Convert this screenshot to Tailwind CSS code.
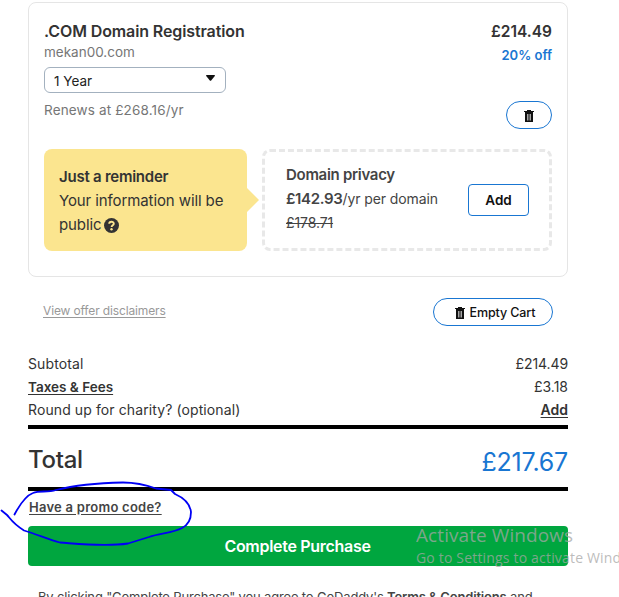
<!DOCTYPE html>
<html lang="en">
<head>
    <meta charset="UTF-8">
    <meta name="viewport" content="width=device-width, initial-scale=1.0">
    <title>Cart</title>
    <script src="https://cdn.jsdelivr.net/npm/@tailwindcss/browser@4"></script>
</head>
<body class="relative w-[619px] h-[597px] overflow-hidden bg-white font-['Inter',sans-serif] text-[#333] whitespace-nowrap">
    <main class="ml-7 w-[540px] pt-[2px]">
        <!-- Cart item -->
        <section class="h-[275px] rounded-lg border border-[#e5e5e5] px-[15px] pt-4">
            <div class="flex justify-between h-[130px]">
                <div>
                    <h2 class="text-[16px] leading-6 font-semibold tracking-[-0.11px]">.COM Domain Registration</h2>
                    <p class="-mt-px text-[13.5px] leading-5 text-[#767676]">mekan00.com</p>
                    <button class="mt-[5px] flex h-[26px] w-[182px] items-center justify-between rounded-md border border-[#a3b1bf] pl-[9px] pr-[10px] text-[13.5px] text-[#222]">
                        <span class="pt-[3px]">1 Year</span>
                        <svg class="w-[9px] h-[6px] -mt-1" viewBox="0 0 9 6"><path d="M0 .8Q0 0 .8 0H8.2Q9 0 9 .8L5.2 5.5Q4.5 6.2 3.8 5.5Z" fill="#111"/></svg>
                    </button>
                    <p class="mt-[7px] text-[13.5px] leading-5 tracking-[0.15px] text-[#767676]">Renews at £268.16/yr</p>
                </div>
                <div class="flex flex-col items-end">
                    <span class="pt-px text-[15.5px] leading-6 font-semibold">£214.49</span>
                    <span class="-mt-px text-[13px] leading-6 font-semibold text-[#1976d2]">20% off</span>
                    <button class="mt-[34px] flex h-7 w-[46px] items-center justify-center rounded-full border border-[#1976d2]">
                        <svg class="w-[10px] h-3 mt-0.5" viewBox="0 0 10 12"><path d="M0 1H3V0H7V1H10V2H9V12H1V2H0Z" fill="#111"/><path d="M3.5 4V10.5M5 4V10.5M6.5 4V10.5" stroke="#ccc" stroke-width=".8"/></svg>
                    </button>
                </div>
            </div>
            <div class="flex justify-between h-[102px]">
                <div class="relative w-[203px] rounded-lg bg-[#fbe58f] pl-[15px] pt-4 text-[15px] leading-6 tracking-[-0.1px]">
                    <h3 class="font-semibold tracking-[-0.24px]">Just a reminder</h3>
                    <p>Your information will be</p>
                    <p class="flex items-center">public
                        <svg class="ml-[3px] w-[15px] h-[15px]" viewBox="0 0 15 15"><circle cx="7.5" cy="7.5" r="7.5" fill="#333"/><path d="M5.2 5.8C5.2 3 9.8 3 9.8 5.7C9.8 7.3 7.6 7.2 7.6 8.9" fill="none" stroke="#fbe58f" stroke-width="1.9"/><circle cx="7.5" cy="11.2" r="1.2" fill="#fbe58f"/></svg>
                    </p>
                    <svg class="absolute left-[203px] top-[39px] w-3 h-6" viewBox="0 0 12 24"><path d="M0 0L12 12L0 24Z" fill="#fbe58f"/></svg>
                </div>
                <div class="flex w-[290px] justify-between rounded-lg border-3 border-dashed border-[#e8e8e8] pl-[21px] pr-5">
                    <div class="pt-[11px] text-[14px] leading-6 tracking-[-0.1px] text-[#444]">
                        <h3 class="text-[15px] font-semibold tracking-[-0.29px]">Domain privacy</h3>
                        <p><b class="text-[15px] font-semibold tracking-[-0.35px]">£142.93</b>/yr per domain</p>
                        <p class="line-through">£178.71</p>
                    </div>
                    <button class="mt-8 h-8 w-[61px] rounded border border-[#1976d2] text-[13.5px] font-semibold text-[#111]">Add</button>
                </div>
            </div>
        </section>

        <div class="mt-[21px] flex h-7 items-center justify-between pl-[15px] pr-[15px]">
            <a class="-mt-0.5 text-[12px] tracking-[-0.14px] text-[#999] underline underline-offset-2">View offer disclaimers</a>
            <button class="flex h-7 w-[120px] items-center justify-center gap-[5px] rounded-full border border-[#1976d2] pl-1 text-[12.5px] font-medium tracking-[-0.12px] text-[#111]">
                <svg class="w-[10px] h-3 mt-0.5" viewBox="0 0 10 12"><path d="M0 1H3V0H7V1H10V2H9V12H1V2H0Z" fill="#111"/><path d="M3.5 4V10.5M5 4V10.5M6.5 4V10.5" stroke="#ccc" stroke-width=".8"/></svg>
                <span class="pt-0.5">Empty Cart</span>
            </button>
        </div>

        <!-- Totals -->
        <div class="mt-[26px] h-[77px] border-b-4 border-black text-[14px] leading-[23px]">
            <div class="flex justify-between"><span class="tracking-[0.1px]">Subtotal</span><span class="tracking-[-0.1px]">£214.49</span></div>
            <div class="flex justify-between"><a class="text-[13.5px] leading-6 -mb-px font-semibold underline underline-offset-2">Taxes &amp; Fees</a><span>£3.18</span></div>
            <div class="flex justify-between"><span class="tracking-[0.1px]">Round up for charity? (optional)</span><a class="font-semibold underline underline-offset-2">Add</a></div>
        </div>
        <div class="flex h-[62px] items-center justify-between border-b-4 border-black">
            <span class="pt-1 text-[24px] font-medium tracking-[-0.3px]">Total</span>
            <span class="pt-[10px] text-[25px] tracking-[-0.2px] text-[#1976d2]">£217.67</span>
        </div>
        <div class="h-[35px] pl-px pt-[3px]"><a class="text-[13px] leading-6 font-semibold tracking-[0.25px] text-[#444] underline underline-offset-2">Have a promo code?</a></div>
        <button class="h-10 w-full rounded bg-[#00a63f] pr-px text-[16px] font-semibold tracking-[-0.3px] text-white">Complete Purchase</button>
        <p class="mt-[19px] pl-[10px] text-[13px] leading-6 tracking-[-0.17px] text-[#444]">By clicking "Complete Purchase" you agree to GoDaddy's <b class="font-semibold">Terms &amp; Conditions</b> and</p>
    </main>

    <!-- Pen mark -->
    <svg class="absolute left-0 top-0 w-[619px] h-[597px]" viewBox="0 0 619 597" fill="none" stroke="#0000f5" stroke-width="1.8" stroke-linecap="round" stroke-linejoin="round">
        <path d="M14.500 514.500C19 506 25 496 33 493C40 490 47 493 56 490C76 485 100 483 123 482.500C138 482.500 149 486 156 488.500L171 490L175 494C184 498 190 503 191 512C191 519 188 525 182 528C173 533 160 533 149 537L128 543.500C105 547 80 544 60 542.500C50 540 36 534 24 530.500C12 523 10 518 7 515L1.500 510.500"/>
    </svg>

    <!-- Watermark -->
    <div class="absolute left-[416px] top-[523px] w-[203px] overflow-hidden font-['Open_Sans',sans-serif] text-[#a6a6a6]/75">
        <p class="text-[19px] leading-6 tracking-[0.08px]">Activate Windows</p>
        <p class="text-[14px] leading-[22px] tracking-[0.18px]">Go to Settings to activate Windows.</p>
    </div>
</body>
</html>
